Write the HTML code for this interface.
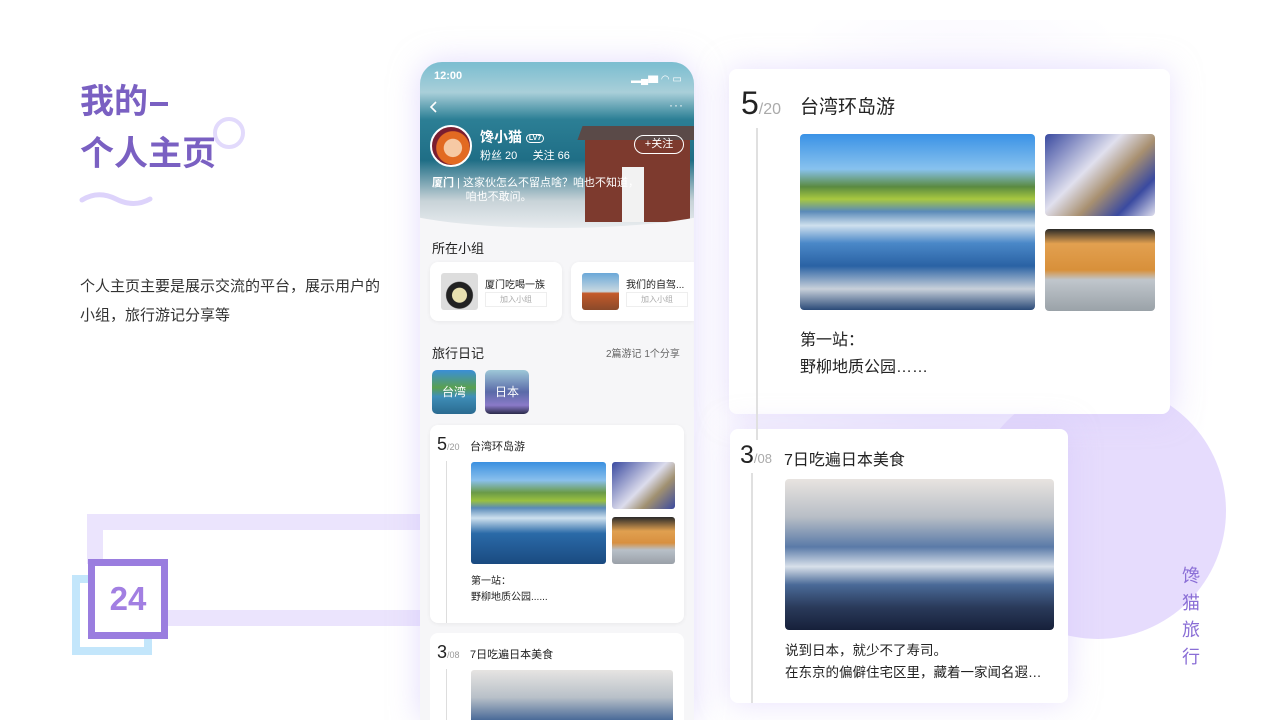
<!DOCTYPE html>
<html style="overflow:hidden;width:1280px;height:720px"><head><meta charset="utf-8"><style>
*{margin:0;padding:0;box-sizing:border-box}
body{width:1280px;height:720px;overflow:hidden;background:#fff;position:relative;font-family:"Liberation Sans","Noto Sans CJK SC",sans-serif;color:#222}
.a{position:absolute}
.t{white-space:nowrap}
.card{background:#fff;border-radius:8px}
</style></head><body>
<div class="a" style="left:700px;top:20px;width:520px;height:690px;background:radial-gradient(ellipse at 50% 45%,rgba(225,215,255,.55),rgba(255,255,255,0) 70%)"></div>
<div class="a" style="left:970px;top:383px;width:256px;height:256px;border-radius:50%;background:#e6dcfd"></div>

<div class="a" style="left:213px;top:117px;width:32px;height:32px;border-radius:50%;border:4px solid #e2dafc"></div>
<div class="a t" style="left:80px;top:82px;font-size:34px;font-weight:bold;color:#7a60c2;line-height:40px">我的<span style="display:inline-block;width:18px;height:4px;background:#7a60c2;vertical-align:middle;margin-left:2px"></span></div>
<div class="a t" style="left:80px;top:134px;font-size:34px;font-weight:bold;color:#7a60c2;line-height:40px">个人主页</div>
<svg class="a" style="left:78px;top:190px" width="76" height="20"><path d="M4 10 Q20 0 38 9 T72 9" stroke="#ddd3fb" stroke-width="5" fill="none" stroke-linecap="round"/></svg>
<div class="a" style="left:80px;top:272px;font-size:15px;line-height:29px;color:#333;width:312px">个人主页主要是展示交流的平台，展示用户的小组，旅行游记分享等</div>

<div class="a" style="left:87px;top:514px;width:333px;height:16px;background:#ebe4fd"></div>
<div class="a" style="left:87px;top:514px;width:16px;height:50px;background:#ebe4fd"></div>
<div class="a" style="left:160px;top:610px;width:260px;height:16px;background:#ebe4fd"></div>
<div class="a" style="left:72px;top:575px;width:80px;height:80px;border:8px solid #c3e6fb"></div>
<div class="a" style="left:88px;top:559px;width:80px;height:80px;border:7px solid #9a7ddf;background:#fff"></div>
<div class="a t" style="left:88px;top:577px;width:80px;text-align:center;font-size:33px;font-weight:bold;color:#a27fe2;line-height:44px">24</div>

<div class="a" style="left:420px;top:62px;width:274px;height:658px;border-radius:22px 22px 0 0;background:#f6f6f8;overflow:hidden;box-shadow:0 0 30px rgba(200,185,250,.5)">
 <div class="a" style="left:-40px;top:-60px;width:354px;height:226px;border-radius:0 0 50% 50%/0 0 28px 28px;overflow:hidden;background:linear-gradient(180deg,#5fb0c8 0%,#7fbfd1 28%,#a9cfd9 40%,#2c7f95 52%,#1f6e86 70%,#c8d3d8 88%,#e8ecef 100%)">
  <div class="a" style="left:205px;top:135px;width:105px;height:85px;background:#7d3a2e"></div>
  <div class="a" style="left:200px;top:124px;width:118px;height:14px;background:#5a4a48;transform:skewX(-20deg)"></div>
  <div class="a" style="left:242px;top:165px;width:22px;height:55px;background:#f2f2f2"></div>
 </div>
 <div class="a t" style="left:14px;top:8px;font-size:11px;color:#fff;font-weight:bold">12:00</div>
 <div class="a t" style="left:211px;top:8px;font-size:10px;color:#fff">▂▄▆ ◠ ▭</div>
 <svg class="a" style="left:9px;top:38px" width="10" height="14"><path d="M7 2 L2 7 L7 12" stroke="#fff" stroke-width="1.6" fill="none"/></svg>
 <div class="a t" style="left:249px;top:36px;font-size:12px;color:#fff;letter-spacing:1px">···</div>
 <div class="a" style="left:10px;top:63px;width:42px;height:42px;border-radius:50%;border:2px solid #fff;background:radial-gradient(circle at 55% 55%,#f6c9a4 0 30%,#e26a22 32% 55%,#7a1e30 58% 80%,#1e2a55 82%)"></div>
 <div class="a t" style="left:60px;top:65px;font-size:14px;color:#fff;font-weight:bold">馋小猫 <span style="font-size:7px;border:1px solid #fff;border-radius:6px;padding:0 2px;vertical-align:middle">LV7</span></div>
 <div class="a t" style="left:60px;top:85px;font-size:11px;color:#fff">粉丝 20 &nbsp; &nbsp; 关注 66</div>
 <div class="a t" style="left:214px;top:73px;width:50px;height:19px;border:1px solid #fff;border-radius:10px;font-size:11px;color:#fff;text-align:center;line-height:17px">+关注</div>
 <div class="a t" style="left:12px;top:114px;font-size:11px;color:#fff;line-height:14px"><b>厦门</b> | 这家伙怎么不留点啥？咱也不知道，<br>&nbsp; &nbsp; &nbsp; &nbsp; &nbsp; &nbsp;咱也不敢问。</div>

 <div class="a t" style="left:12px;top:176px;font-size:13px;color:#222">所在小组</div>
 <div class="a card" style="left:10px;top:200px;width:132px;height:59px;box-shadow:0 1px 4px rgba(0,0,0,.06)">
  <div class="a" style="left:11px;top:11px;width:37px;height:37px;border-radius:3px;background:radial-gradient(circle at 50% 60%,#e8e0b0 0 25%,#222 27% 45%,#ddd 48%)"></div>
  <div class="a t" style="left:55px;top:14px;font-size:10px">厦门吃喝一族</div>
  <div class="a t" style="left:55px;top:30px;width:62px;height:15px;border:1px solid #eee;font-size:8px;color:#aaa;text-align:center;line-height:13px">加入小组</div>
 </div>
 <div class="a card" style="left:151px;top:200px;width:123px;height:59px;border-radius:8px 0 0 8px;box-shadow:0 1px 4px rgba(0,0,0,.06)">
  <div class="a" style="left:11px;top:11px;width:37px;height:37px;border-radius:3px;background:linear-gradient(#6aa8d8,#c8d8e0 50%,#c45a2a 55%,#8a4a2a)"></div>
  <div class="a t" style="left:55px;top:14px;font-size:10px">我们的自驾...</div>
  <div class="a t" style="left:55px;top:30px;width:62px;height:15px;border:1px solid #eee;font-size:8px;color:#aaa;text-align:center;line-height:13px">加入小组</div>
 </div>

 <div class="a t" style="left:12px;top:281px;font-size:13px;color:#222">旅行日记</div>
 <div class="a t" style="left:186px;top:283px;font-size:10px;color:#666">2篇游记 1个分享</div>
 <div class="a" style="left:12px;top:308px;width:44px;height:44px;border-radius:5px;background:linear-gradient(#3a8ed8,#5aa050 40%,#3f8fb8 60%,#2a6a90);color:#fff;font-size:12px;text-align:center;line-height:44px">台湾</div>
 <div class="a" style="left:65px;top:308px;width:44px;height:44px;border-radius:5px;background:linear-gradient(#9ec8d8,#5a6aa8 50%,#8a7ac8 80%,#2a2a4a);color:#fff;font-size:12px;text-align:center;line-height:44px">日本</div>

 <div class="a card" style="left:10px;top:363px;width:254px;height:198px;box-shadow:0 1px 4px rgba(0,0,0,.06)">
  <div class="a t" style="left:7px;top:9px;font-size:18px;color:#222">5<span style="font-size:9px;color:#999">/20</span></div>
  <div class="a t" style="left:40px;top:13px;font-size:11px">台湾环岛游</div>
  <div class="a" style="left:16px;top:36px;width:1px;height:162px;background:#ddd"></div>
  <div class="a" style="left:41px;top:37px;width:135px;height:102px;border-radius:3px;background:linear-gradient(#3a90e0 0%,#8ac0ec 18%,#6a9a48 30%,#9ac040 38%,#5a8ab8 45%,#cde0ee 55%,#2a6aa8 70%,#1a4a80 100%)"></div>
  <div class="a" style="left:182px;top:37px;width:63px;height:47px;border-radius:3px;background:linear-gradient(135deg,#3a4aa0,#dcdcec 50%,#a09070 70%,#3a4aa0)"></div>
  <div class="a" style="left:182px;top:92px;width:63px;height:47px;border-radius:3px;background:linear-gradient(#2a2a2a,#e0a050 30%,#d89040 55%,#b8c0c8 70%,#9aa0a8)"></div>
  <div class="a t" style="left:41px;top:149px;font-size:10px;line-height:16px">第一站：<br>野柳地质公园......</div>
 </div>
 <div class="a card" style="left:10px;top:571px;width:254px;height:87px;border-radius:8px 8px 0 0">
  <div class="a t" style="left:7px;top:9px;font-size:18px;color:#222">3<span style="font-size:9px;color:#999">/08</span></div>
  <div class="a t" style="left:40px;top:13px;font-size:11px">7日吃遍日本美食</div>
  <div class="a" style="left:16px;top:36px;width:1px;height:51px;background:#ddd"></div>
  <div class="a" style="left:41px;top:37px;width:202px;height:50px;border-radius:3px 3px 0 0;background:linear-gradient(#e6e4e2,#b8c0c8 55%,#4a6a98 100%)"></div>
 </div>
</div>

<div class="a" style="left:756px;top:128px;width:1.5px;height:312px;background:#e0e0e0;z-index:3"></div>
<div class="a card" style="left:729px;top:69px;width:441px;height:345px;box-shadow:0 0 30px rgba(210,195,250,.5)">
 <div class="a t" style="left:12px;top:14px;font-size:32px;color:#222;line-height:40px">5<span style="font-size:16px;color:#aaa">/20</span></div>
 <div class="a t" style="left:71px;top:23px;font-size:19px;color:#222">台湾环岛游</div>
 <div class="a" style="left:71px;top:65px;width:235px;height:176px;border-radius:4px;background:linear-gradient(#3a92e6 0%,#88c2ee 20%,#5a8a40 30%,#a8c840 37%,#5a8ab8 44%,#cfe0ee 52%,#4a88c8 62%,#2a62a4 75%,#c8d0da 88%,#2a4a78 100%)"></div>
 <div class="a" style="left:316px;top:65px;width:110px;height:82px;border-radius:4px;background:linear-gradient(135deg,#3a4aa0 0%,#e0e0ee 40%,#a89070 60%,#3a4aa0 80%,#e0e0ee)"></div>
 <div class="a" style="left:316px;top:160px;width:110px;height:82px;border-radius:4px;background:linear-gradient(#2a2a28 0%,#e2a050 18%,#d8903a 50%,#c0c6cc 62%,#9aa2a8 100%)"></div>
 <div class="a t" style="left:71px;top:258px;font-size:16px;line-height:27px;color:#222">第一站：<br>野柳地质公园……</div>
</div>
<div class="a card" style="left:730px;top:429px;width:338px;height:274px;box-shadow:0 0 30px rgba(210,195,250,.5)">
 <div class="a t" style="left:10px;top:10px;font-size:25px;color:#222;line-height:32px">3<span style="font-size:13px;color:#aaa">/08</span></div>
 <div class="a t" style="left:54px;top:17px;font-size:16px;color:#222">7日吃遍日本美食</div>
 <div class="a" style="left:21px;top:44px;width:1.5px;height:230px;background:#e0e0e0"></div>
 <div class="a" style="left:55px;top:50px;width:269px;height:151px;border-radius:4px;background:linear-gradient(#e8e4e0 0%,#b8bec6 25%,#5a7aa8 45%,#d8e0ea 58%,#4a6a98 70%,#2a3a5a 85%,#16203a 100%)"></div>
 <div class="a t" style="left:55px;top:211px;font-size:13.5px;line-height:22px;color:#222">说到日本，就少不了寿司。<br>在东京的偏僻住宅区里，藏着一家闻名遐…</div>
</div>

<div class="a" style="left:1182px;top:563px;font-size:18px;line-height:27px;color:#8a6ed6;width:20px">馋<br>猫<br>旅<br>行</div>
</body></html>
